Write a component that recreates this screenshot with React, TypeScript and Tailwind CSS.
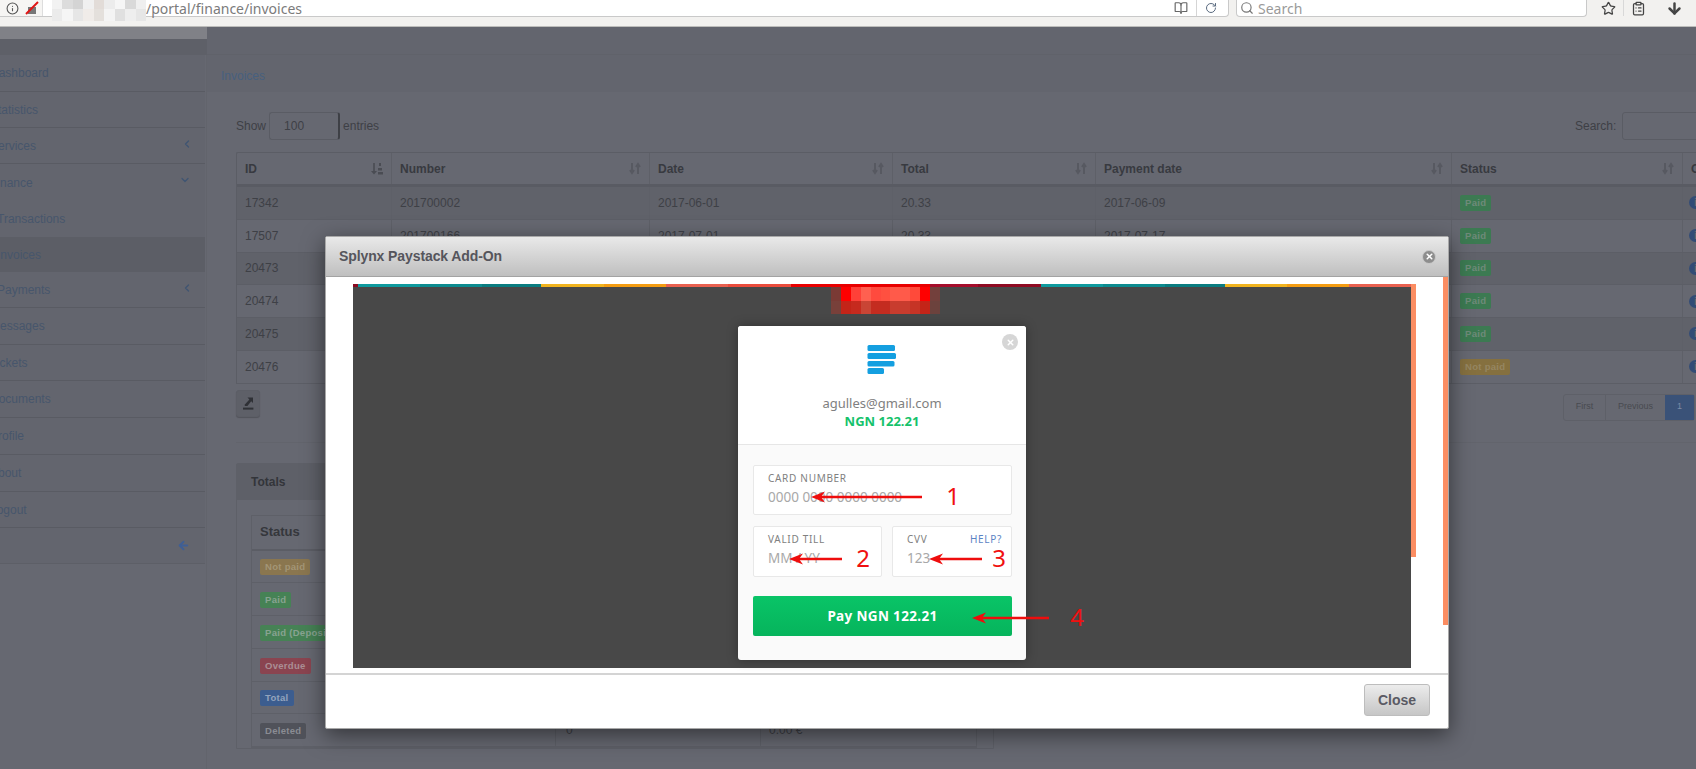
import { ChevronDown, ChevronLeft, ArrowLeft, Info, Search, RotateCw, Star, ClipboardList, ArrowDown, BookOpen, X } from 'lucide-react';

const sidebarItems = [
  { label: 'Dashboard', h: 'h-[37px]' },
  { label: 'Statistics', h: 'h-[36px]' },
  { label: 'Services', h: 'h-[36px]', chevron: 'left' },
  { label: 'Finance', h: 'h-[37px]', chevron: 'down', noBorder: true },
  { label: 'Transactions', h: 'h-[36px]', sub: true, noBorder: true },
  { label: 'Invoices', h: 'h-[35px]', sub: true, active: true, noBorder: true },
  { label: 'Payments', h: 'h-[36px]', sub: true, chevron: 'left' },
  { label: 'Messages', h: 'h-[37px]' },
  { label: 'Tickets', h: 'h-[36px]' },
  { label: 'Documents', h: 'h-[37px]' },
  { label: 'Profile', h: 'h-[37px]' },
  { label: 'About', h: 'h-[37px]' },
  { label: 'Logout', h: 'h-[36px]' },
];

const invoices = [
  { id: '17342', number: '201700002', date: '2017-06-01', total: '20.33', paid: '2017-06-09', status: 'Paid' },
  { id: '17507', number: '201700166', date: '2017-07-01', total: '20.33', paid: '2017-07-17', status: 'Paid' },
  { id: '20473', number: '201700201', date: '2017-08-01', total: '20.33', paid: '2017-08-09', status: 'Paid' },
  { id: '20474', number: '201700202', date: '2017-09-01', total: '20.33', paid: '2017-09-09', status: 'Paid' },
  { id: '20475', number: '201700203', date: '2017-10-01', total: '20.33', paid: '2017-10-09', status: 'Paid' },
  { id: '20476', number: '201700204', date: '2017-11-01', total: '20.33', paid: '', status: 'Not paid' },
];

const totals = [
  { label: 'Not paid', cls: 'bg-[#8a764f] text-[#a39576]' },
  { label: 'Paid', cls: 'bg-[#468255] text-[#88a391]' },
  { label: 'Paid (Deposit)', cls: 'bg-[#468255] text-[#88a391]' },
  { label: 'Overdue', cls: 'bg-[#8a4450] text-[#ab8f95]' },
  { label: 'Total', cls: 'bg-[#3c5d8f] text-[#93a4bd]' },
  { label: 'Deleted', cls: 'bg-[#50525a] text-[#8a8c93]' },
];

const stripe = [
  'w-[5px] bg-[#8a0a20]', 'w-[62px] bg-[#0f9a9e]', 'w-[62px] bg-[#0c8b8f]', 'w-[59px] bg-[#0a7c80]',
  'w-[63px] bg-[#f0b31e]', 'w-[62px] bg-[#f39c12]', 'w-[62px] bg-[#e8604f]', 'w-[63px] bg-[#e94c3c]',
  'w-[139px] bg-[#e80000]', 'w-[48px] bg-[#a50d2b]', 'w-[63px] bg-[#8f0b22]',
  'w-[62px] bg-[#0f9a9e]', 'w-[62px] bg-[#0c8b8f]', 'w-[60px] bg-[#0a7c80]',
  'w-[62px] bg-[#f0b31e]', 'w-[62px] bg-[#f39c12]', 'w-[62px] bg-[#e8604f]',
];

const blurTop = ['bg-[#7a3a35]', 'bg-[#ff0000]', 'bg-[#ff4038]', 'bg-[#ff6050]', 'bg-[#ff4a3e]', 'bg-[#ff5040]', 'bg-[#ff5a4a]', 'bg-[#ff5a4a]', 'bg-[#ff4a3a]', 'bg-[#ff0000]', 'bg-[#73403c]'];
const blurBottom = ['bg-[#78403a]', 'bg-[#c42418]', 'bg-[#c62a1e]', 'bg-[#c94535]', 'bg-[#c42c20]', 'bg-[#c42c20]', 'bg-[#c83c2e]', 'bg-[#c83c2e]', 'bg-[#c63426]', 'bg-[#c42418]', 'bg-[#6c423d]'];
const urlTilesTop = ['bg-[#f2f2f2]', 'bg-[#dcdcdc]', 'bg-[#d4d4d4]', 'bg-[#f0f0f0]', 'bg-[#e2dcd8]', 'bg-[#ececec]', 'bg-[#f6f6f6]', 'bg-[#d9d9d9]', 'bg-[#efefef]'];
const urlTilesBottom = ['bg-[#ebebeb]', 'bg-[#f5f5f5]', 'bg-[#e6e6e6]', 'bg-[#f0ece9]', 'bg-[#e4e0dc]', 'bg-[#f4f4f4]', 'bg-[#e0e0e0]', 'bg-[#eeeeee]', 'bg-[#e6e6e6]'];

const gridCols = 'grid grid-cols-[155px_258px_243px_203px_356px_231px_60px]';

function SortIcon({ strong }: { strong?: boolean }) {
  if (strong) {
    return (
      <svg width="12" height="13" viewBox="0 0 12 13" className="text-[#4a4c53]" fill="currentColor">
        <path d="M2.2 1h1.6v8H6l-3 3.5L0 9h2.2z" />
        <path d="M8 1h2v3H8zM7 6h4v2.5H7zM7 10h5v2.5H7z" />
      </svg>
    );
  }
  return (
    <svg width="12" height="13" viewBox="0 0 12 13" className="text-[#575961]" fill="none" stroke="currentColor" strokeWidth="2">
      <path d="M3 1v9M1 8l2 3 2-3" />
      <path d="M9 12V3M7 5l2-3 2 3" />
    </svg>
  );
}

function Arrow({ x, y, w }: { x: number; y: number; w: number }) {
  return (
    <svg width={w} height="14" viewBox={`0 0 ${w} 14`} className="absolute" style={{ left: x, top: y - 7 }}>
      <path d={`M10 7H${w}`} stroke="#ee0d0d" strokeWidth="2.4" />
      <path d="M0 7l14-5.5-4 5.5 4 5.5z" fill="#ee0d0d" />
    </svg>
  );
}

function Digit({ x, y, n }: { x: number; y: number; n: string }) {
  return (
    <span className="absolute text-[24px] leading-none text-[#f01010] font-['Noto_Sans',sans-serif] -translate-x-1/2 -translate-y-1/2" style={{ left: x, top: y }}>
      {n}
    </span>
  );
}

function BrowserBar() {
  return (
    <div className="h-[27px] bg-[#f2f1ef] border-b border-[#bdbdbb] flex items-start font-['Noto_Sans',sans-serif] shrink-0">
      <div className="w-[1229px] h-[17px] flex items-center bg-white border-b border-r border-[#c9c9c9] rounded-br-sm">
        <div className="w-[43px] h-full flex items-center gap-[6px] pl-[6px] bg-[#f6f5f3] border-r border-[#dddddd]">
          <Info size={13} className="text-[#555]" />
          <svg width="14" height="14" viewBox="0 0 14 14">
            <path d="M3 13V6h8v7z" fill="#777" />
            <path d="M1 13L13 1" stroke="#e01515" strokeWidth="2" />
          </svg>
        </div>
        <div className="w-[94px] ml-[9px] h-[21px] self-start grid grid-cols-9 grid-rows-[9px_12px] shrink-0 z-10">
          {urlTilesTop.map((c, i) => <div key={i} className={c} />)}
          {urlTilesBottom.map((c, i) => <div key={i} className={c} />)}
        </div>
        <span className="text-[14px] text-[#7b7b7b]">/portal/finance/invoices</span>
        <div className="ml-auto flex items-center">
          <BookOpen size={14} className="text-[#666]" />
          <div className="w-px h-[16px] bg-[#d5d5d5] mx-[8px]" />
          <RotateCw size={12} className="text-[#5a6b80] mr-[11px]" />
        </div>
      </div>
      <div className="ml-[7px] w-[351px] h-[17px] bg-white border-b border-x border-[#c9c9c9] rounded-b-sm flex items-center pl-[3px] gap-[4px]">
        <Search size={14} className="text-[#777]" />
        <span className="text-[14px] text-[#9a9a9a]">Search</span>
      </div>
      <div className="flex items-center h-[16px] pl-[14px]">
        <Star size={15} strokeWidth={2} className="text-[#444]" />
        <div className="w-px h-[16px] bg-[#d8d8d8] mx-[7px]" />
        <ClipboardList size={15} strokeWidth={2} className="text-[#444]" />
        <ArrowDown size={17} strokeWidth={3.5} className="text-[#444] ml-[20px]" />
      </div>
    </div>
  );
}

function Sidebar() {
  return (
    <div className="w-[207px] shrink-0 bg-[#666871] border-r border-[#62646c]">
      <div className="h-[12px] w-[207px] bg-[#808187]" />
      <div className="h-[16px] w-[207px] bg-[#5e6068]" />
      <div className="bg-[#63656e] w-[205px] font-['Liberation_Sans',sans-serif] text-[12px] text-[#47566c]">
        {sidebarItems.map((item) => (
          <div
            key={item.label}
            className={`${item.h} flex items-center justify-between pr-[12px] border-[#595b63] ${item.noBorder ? '' : 'border-b'} ${item.active ? 'bg-[#5c5e66]' : ''}`}
          >
            <span className={item.sub ? 'ml-[-3px]' : 'ml-[-10px]'}>{item.label}</span>
            {item.chevron === 'left' && <ChevronLeft size={12} strokeWidth={2.5} className="text-[#3f5572] mb-[3px]" />}
            {item.chevron === 'down' && <ChevronDown size={12} strokeWidth={2.5} className="text-[#3f5572] mr-[2px] mb-[5px]" />}
          </div>
        ))}
        <div className="h-[36px] flex items-center justify-end pr-[15px] border-b border-[#5d5f67]">
          <ArrowLeft size={13} strokeWidth={3.5} className="text-[#3f5f95]" />
        </div>
      </div>
    </div>
  );
}

function Badge({ label, cls }: { label: string; cls: string }) {
  return <span className={`inline-flex items-center h-[16px] px-[5px] rounded-[2px] text-[9.5px] font-bold tracking-[0.3px] ${cls}`}>{label}</span>;
}

function InvoicesTable() {
  const headers = ['ID', 'Number', 'Date', 'Total', 'Payment date', 'Status'];
  return (
    <div className="w-[1520px] border-t border-l border-[#5b5d65] rounded-t-[2px] text-[12px]">
      <div className={`${gridCols} h-[34px] border-b-[3px] border-[#595b63] text-[#383a40] font-bold`}>
        {headers.map((h, i) => (
          <div key={h} className="flex items-center justify-between px-[8px] border-r border-[#5e6068]">
            {h}
            <SortIcon strong={i === 0} />
          </div>
        ))}
        <div className="flex items-center pl-[8px]">O</div>
      </div>
      {invoices.map((row, i) => (
        <div key={row.id} className={`${gridCols} h-[32.75px] border-b border-[#5c5e66] text-[#3e4046] ${i % 2 === 0 ? 'bg-[#60626a]' : ''}`}>
          <div className="flex items-center px-[8px] border-r border-[#5e6068]">{row.id}</div>
          <div className="flex items-center px-[8px] border-r border-[#5e6068]">{row.number}</div>
          <div className="flex items-center px-[8px] border-r border-[#5e6068]">{row.date}</div>
          <div className="flex items-center px-[8px] border-r border-[#5e6068]">{row.total}</div>
          <div className="flex items-center px-[8px] border-r border-[#5e6068]">{row.paid}</div>
          <div className="flex items-center px-[8px] border-r border-[#5e6068]">
            <Badge label={row.status} cls={row.status === 'Paid' ? 'bg-[#3c7a52] text-[#6f8a7a]' : 'bg-[#85703f] text-[#958662]'} />
          </div>
          <div className="flex items-center pl-[6px]">
            <span className="size-[13px] rounded-full bg-[#324c76] text-[#666871] text-[10px] font-bold leading-[13px] text-center">i</span>
          </div>
        </div>
      ))}
    </div>
  );
}

function TotalsPanel() {
  return (
    <div className="mt-[20px] w-[758px] border border-[#5e6068] rounded-t-[2px] text-[12px]">
      <div className="h-[36px] bg-[#5e6068] flex items-center pl-[14px] font-bold text-[#33353a]">Totals</div>
      <div className="px-[14px] pt-[15px]">
        <div className="w-[726px] border border-[#5e6068]">
          <div className="grid grid-cols-[304px_205px_1fr] h-[35px] items-center border-b-2 border-[#5b5d65] font-bold text-[13px] text-[#35373c]">
            <span className="pl-[8px]">Status</span>
          </div>
          {totals.map((t) => (
            <div key={t.label} className="grid grid-cols-[304px_205px_1fr] h-[32.75px] border-b border-[#5e6068] text-[#3e4046]">
              <div className="flex items-center pl-[8px] pt-[2px] border-r border-[#5e6068]"><Badge label={t.label} cls={t.cls} /></div>
              <span className="flex items-center pl-[10px] border-r border-[#5e6068]">0</span>
              <span className="flex items-center pl-[8px]">0.00 €</span>
            </div>
          ))}
        </div>
      </div>
    </div>
  );
}

function PaymentCard() {
  return (
    <div className="relative mt-[39px] w-[288px] h-[334px] rounded-[3px] bg-[#fafafa] shadow-[0_0_12px_rgba(0,0,0,0.3)] font-['Noto_Sans',sans-serif] overflow-hidden">
      <div className="h-[119px] bg-white border-b border-[#e6e6e6] flex flex-col items-center pt-[19px]">
        <svg width="30" height="30" viewBox="0 0 30 30">
          <rect x="0.5" y="0" width="27.5" height="6" rx="1.5" fill="#149fe0" />
          <rect x="0.5" y="8" width="28.5" height="6" rx="1.5" fill="#149fe0" />
          <rect x="0.5" y="16" width="27" height="5.5" rx="1.5" fill="#149fe0" />
          <rect x="0.5" y="23" width="16.5" height="6" rx="1.5" fill="#149fe0" />
        </svg>
        <span className="mt-[19px] text-[13px] leading-[18px] text-[#808080]">agulles@gmail.com</span>
        <span className="text-[13px] leading-[18px] font-bold text-[#15c26b]">NGN 122.21</span>
      </div>
      <div className="absolute right-[8px] top-[8px] size-[16px] rounded-full bg-[#d6d6d6] flex items-center justify-center">
        <X size={9} strokeWidth={4} className="text-white" />
      </div>
      <div className="pl-[15px] pr-[14px] pt-[20px]">
        <div className="h-[50px] border border-[#e8e8e8] rounded-[2px] bg-white pl-[14px] pt-[5px]">
          <div className="text-[10px] leading-[14px] tracking-[0.7px] text-[#808080]">CARD NUMBER</div>
          <div className="mt-[2px] text-[13.5px] leading-[20px] text-[#a8a8a8]">0000 0000 0000 0000</div>
        </div>
        <div className="mt-[11px] flex gap-[10px]">
          <div className="w-[129px] h-[51px] border border-[#e8e8e8] rounded-[2px] bg-white pl-[14px] pt-[5px]">
            <div className="text-[10px] leading-[14px] tracking-[0.7px] text-[#808080]">VALID TILL</div>
            <div className="mt-[2px] text-[13.5px] leading-[20px] text-[#a8a8a8]">MM / YY</div>
          </div>
          <div className="w-[120px] h-[51px] border border-[#e8e8e8] rounded-[2px] bg-white pl-[14px] pr-[9px] pt-[5px]">
            <div className="flex justify-between text-[10px] leading-[14px] tracking-[0.7px] text-[#808080]">
              <span>CVV</span>
              <span className="text-[#5b84c4]">HELP?</span>
            </div>
            <div className="mt-[2px] text-[13.5px] leading-[20px] text-[#a8a8a8]">123</div>
          </div>
        </div>
        <div className="mt-[19px] h-[40px] rounded-[2px] bg-gradient-to-b from-[#09c467] to-[#06b45c] flex items-center justify-center text-[13.5px] font-bold tracking-[0.35px] text-white">
          Pay NGN 122.21
        </div>
      </div>
    </div>
  );
}

function Modal() {
  return (
    <div className="absolute left-[325px] top-[236px] w-[1124px] h-[493px] bg-white border border-[#a8a8a8] rounded-[2px] shadow-[0_6px_22px_rgba(0,0,0,0.5)] flex flex-col font-['Liberation_Sans',sans-serif]">
      <div className="h-[40px] shrink-0 bg-gradient-to-b from-[#e9e9e9] to-[#bfbfbf] border-b border-[#a3a3a3] flex items-center justify-between pl-[13px] pr-[12px]">
        <span className="text-[14px] font-bold tracking-[-0.1px] text-[#55555c]">Splynx Paystack Add-On</span>
        <span className="size-[14px] rounded-full bg-[#8d8d8d] border border-[#c9c9c9] flex items-center justify-center">
          <X size={9} strokeWidth={4} className="text-white" />
        </span>
      </div>
      <div className="relative flex-1 min-h-0">
        <div className="absolute right-0 top-0 w-[5px] h-[348px] bg-[#fb8d62]" />
        <div className="ml-[27px] mt-[7px] w-[1063px] flex">
          <div className="w-[1058px]">
            <div className="flex h-[3px]">
              {stripe.map((c, i) => <div key={i} className={`h-full shrink-0 ${c}`} />)}
            </div>
            <div className="relative h-[381px] bg-[#484848] flex justify-center">
              <div className="absolute left-[478px] top-0 w-[109px] grid grid-cols-11 h-[27px]">
                {blurTop.map((c, i) => <div key={i} className={c} />)}
                {blurBottom.map((c, i) => <div key={i} className={c} />)}
              </div>
              <PaymentCard />
            </div>
          </div>
          <div className="w-[5px] h-[273px] bg-[#fb8d62]" />
        </div>
      </div>
      <div className="h-[55px] shrink-0 border-t-2 border-[#d4d4d4] flex items-start justify-end pr-[18px] pt-[9px]">
        <button className="w-[66px] h-[32px] rounded-[3px] border border-[#bdbdbd] bg-gradient-to-b from-[#ececec] to-[#c6c6c6] text-[14px] font-bold text-[#5a5a64]">
          Close
        </button>
      </div>
    </div>
  );
}

export default function App() {
  return (
    <div className="relative w-[1696px] h-[769px] overflow-hidden bg-[#666871] flex flex-col font-['Liberation_Sans',sans-serif]">
      <BrowserBar />
      <div className="flex flex-1 min-h-0">
        <Sidebar />
        <div className="flex-1 min-w-0">
          <div className="h-[28px] bg-[#63656e] border-b border-[#60626a]" />
          <div className="h-[37px] bg-[#63656e] flex items-center pl-[14px] pt-[5px] text-[12px] text-[#47607f]">Invoices</div>
          <div className="pl-[29px]">
            <div className="h-[60px] pt-[8px] flex items-center text-[12px] text-[#3e4046] relative">
              <span>Show</span>
              <div className="ml-[3px] w-[71px] h-[28px] border border-[#5a5c64] rounded-[3px] border-r-2 border-r-[#3e4046] flex items-center pl-[14px]">100</div>
              <span className="ml-[3px]">entries</span>
              <span className="absolute left-[1339px]">Search:</span>
              <div className="absolute left-[1386px] w-[100px] h-[28px] border border-[#5a5c64] rounded-[3px]" />
            </div>
            <InvoicesTable />
            <div className="h-[33px] w-[1459px] flex items-start justify-between">
              <div className="w-[24px] h-[27px] mt-[6px] rounded-[3px] border border-[#5c5e66] bg-[#5e6068] shadow-[0_1px_1px_rgba(0,0,0,0.2)] flex items-center justify-center">
                <svg width="12" height="13" viewBox="0 0 12 13">
                  <path d="M1 10.6h10.4v2H1z" fill="#2f3136" />
                  <path d="M5.5 0.5H11V6L9.2 4.2 5.4 9H3.2L2.4 8 7.4 2.6z" fill="#2f3136" />
                </svg>
              </div>
              <div className="flex h-[27px] mt-[10px] text-[9px] text-[#484a50] rounded-[3px] border border-[#5e6068]">
                <span className="w-[42px] flex items-center justify-center border-r border-[#5e6068]">First</span>
                <span className="w-[59px] flex items-center justify-center">Previous</span>
                <span className="w-[29px] flex items-center justify-center bg-[#3a5278] text-[#7d8ca6]">1</span>
              </div>
            </div>
            <div className="mt-[25px] h-px bg-[#62646c]" />
            <TotalsPanel />
          </div>
        </div>
      </div>
      <Modal />
      <Arrow x={811} y={497} w={111} />
      <Arrow x={789} y={559} w={53} />
      <Arrow x={929} y={559} w={53} />
      <Arrow x={972} y={618} w={77} />
      <Digit x={953} y={496} n="1" />
      <Digit x={863} y={558} n="2" />
      <Digit x={999} y={558} n="3" />
      <Digit x={1077} y={617} n="4" />
    </div>
  );
}
